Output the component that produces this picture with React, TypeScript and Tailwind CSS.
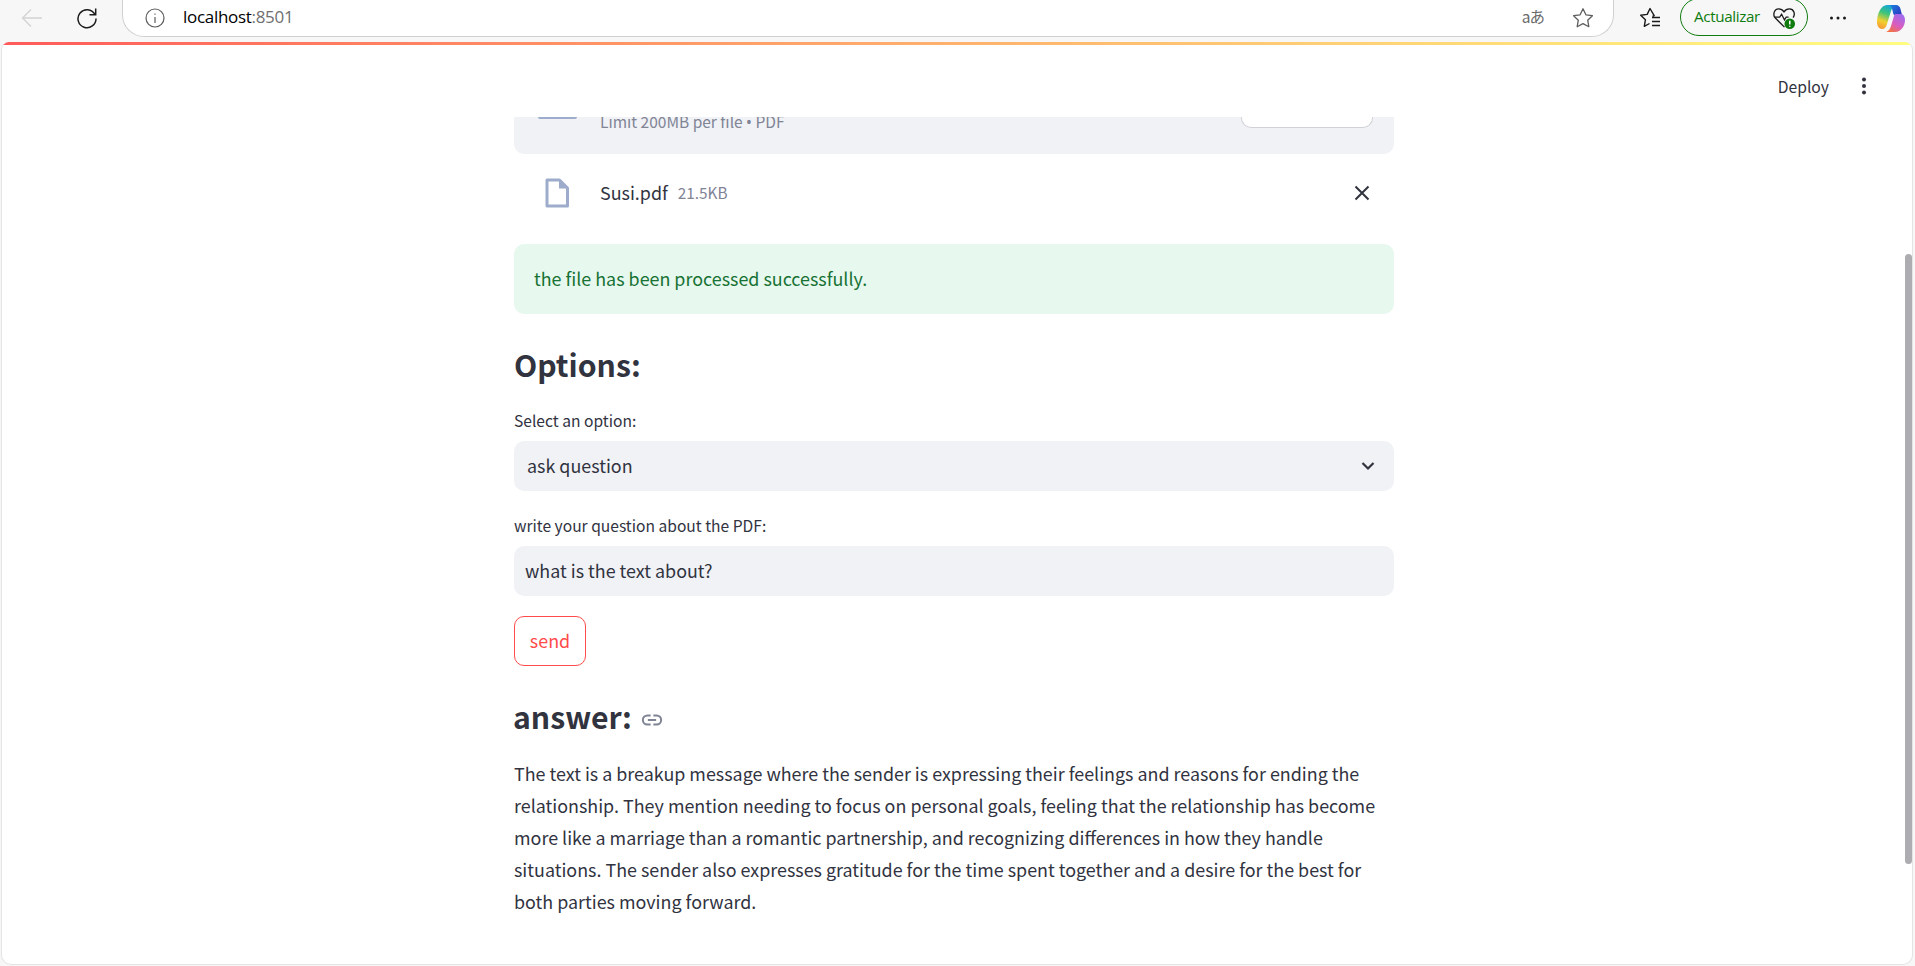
import React from "react";

const ui = "font-['Noto_Sans_CJK_SC','Source_Sans_Pro',sans-serif]";

function Toolbar() {
  return (
    <div className="h-[42px] overflow-hidden flex items-start bg-[#f7f7f7] font-['Open_Sans',sans-serif]">
      <div className="w-[122px] h-[36px] flex items-center shrink-0">
        <svg className="ml-[21px] w-[22px] h-[22px]" viewBox="0 0 22 22" fill="none" stroke="#d4d4d4" strokeWidth="1.4">
          <path d="M21 11H1.5M10 2.5 1.5 11l8.5 8.5" />
        </svg>
        <svg className="ml-[33px] w-[22px] h-[22px]" viewBox="0 0 22 22" fill="none" stroke="#1c1c1c" strokeWidth="1.5">
          <path d="M18.8 7.2A9 9 0 1 0 20 11.5" />
          <path d="M19.7 1.5v6.2h-6.2" />
        </svg>
      </div>
      <div className="w-[1492px] h-[37px] shrink-0 flex items-center rounded-b-[22px] border-b border-r border-l border-[#d0d0d0] bg-white">
        <svg className="ml-[22px] w-[20px] h-[20px]" viewBox="0 0 20 20" fill="none" stroke="#5c5c5c" strokeWidth="1.2">
          <circle cx="10" cy="10" r="9" />
          <path d="M10 9v6M10 5.4v1.4" />
        </svg>
        <span className="ml-[18px] -mt-[2px] text-[17px] tracking-[-0.3px] text-black">
          localhost<span className="text-[#6f6f6f]">:8501</span>
        </span>
        <span className="ml-auto -mt-[2px] text-[15.500px] leading-none text-[#6a6a6a] font-['Noto_Sans_CJK_JP',sans-serif] tracking-[-1px]">aあ</span>
        <svg className="ml-[28px] mr-[19px] w-[22px] h-[22px]" viewBox="0 0 22 22" fill="none" stroke="#5e5e5e" strokeWidth="1.3" strokeLinejoin="round">
          <path d="m11 1.8 2.9 6 6.5.9-4.7 4.5 1.1 6.5-5.8-3.1-5.8 3.1 1.1-6.5L1.6 8.7l6.500-.9z" />
        </svg>
      </div>
      <div className="flex items-start h-[36px] flex-1">
        <svg className="ml-[25px] mt-[7px] w-[22px] h-[22px]" viewBox="0 0 22 22" fill="none" stroke="#1a1a1a" strokeWidth="1.4" strokeLinejoin="round">
          <path d="M13.500 9.500 15.200 8.700 11 1.500 8.200 7.400l-6.500.9 4.700 4.500-1.100 6.500 5.200-2.800" />
          <path d="M13 10.500h8M13 14.500h8M13 18.500h8" />
        </svg>
        <div className="ml-[19px] w-[128px] h-[38px] -mt-[2px] shrink-0 flex items-center rounded-full border-[1.5px] border-[#107c10] pl-[13px] text-[15.200px] tracking-[-0.35px] text-[#107c10]">
          <span className="-mt-[1px]">Actualizar</span>
          <svg className="ml-[12px] mt-[1px] w-[24px] h-[24px]" viewBox="0 0 25 25" fill="none">
            <path d="M13 22 3.500 12.600C.5 9.500 2 3 7 3c2.500 0 4.400 1.400 5.500 3 1.100-1.600 3-3 5.500-3 5 0 6.500 5.500 4 9" stroke="#1a1a1a" strokeWidth="1.4" />
            <path d="M3 11.500h5l2-3 3 6 1.800-3h2.500" stroke="#1a1a1a" strokeWidth="1.300" />
            <circle cx="18.500" cy="18.500" r="5.500" fill="#107c10" />
            <path d="M18.500 15.300v3.900M18.500 20.500v1" stroke="#fff" strokeWidth="1.600" />
          </svg>
        </div>
        <svg className="ml-[21px] mt-[9px] w-[18px] h-[18px]" viewBox="0 0 18 18" fill="#1a1a1a">
          <circle cx="2.500" cy="9" r="1.500" />
          <circle cx="9" cy="9" r="1.500" />
          <circle cx="15.500" cy="9" r="1.500" />
        </svg>
        <svg className="ml-[30px] mt-[4px] w-[28px] h-[28px]" viewBox="0 0 28 28">
          <defs>
            <linearGradient id="cpa" x1="0.6" y1="0" x2="0.3" y2="1">
              <stop offset="0" stopColor="#16a6d8" />
              <stop offset="0.35" stopColor="#3cc47c" />
              <stop offset="0.7" stopColor="#f2d02f" />
              <stop offset="1" stopColor="#f59a36" />
            </linearGradient>
            <linearGradient id="cpb" x1="0" y1="0" x2="1" y2="0.6">
              <stop offset="0" stopColor="#1a86e0" />
              <stop offset="1" stopColor="#2b3fc4" />
            </linearGradient>
            <linearGradient id="cpc" x1="0.8" y1="0" x2="0.2" y2="1">
              <stop offset="0" stopColor="#9b6cf0" />
              <stop offset="0.55" stopColor="#d95cc0" />
              <stop offset="1" stopColor="#f4743c" />
            </linearGradient>
          </defs>
          <path d="M10 1h9c-3 1-4 3-5 6l-4 13c-1 4-3 5-5 5-3 0-5-3-5-7C0 10 4 1 10 1Z" fill="url(#cpa)" />
          <path d="M12 1h7c2.500 0 4 2 4.500 4l1.500 6h-7c-1 0-1.500-.5-1.800-1.500L15 4.500C14.500 2.500 13.500 1.500 12 1Z" fill="url(#cpb)" />
          <path d="M18.500 10H24c2.500 0 4 3 4 6 0 6-4 12-10 12H9c3-1 4-3 5-6l3-10c.3-1 .7-1.700 1.500-2Z" fill="url(#cpc)" />
        </svg>
      </div>
    </div>
  );
}

function Header() {
  return (
    <div className="h-[72px] flex items-center justify-end text-[#31333f]">
      <span className="text-[15.700px] leading-none mt-[11px]">Deploy</span>
      <svg className="ml-[25px] mr-[38px] mt-[10px] w-[20px] h-[20px]" viewBox="0 0 20 20" fill="#31333f">
        <circle cx="10" cy="3.500" r="2" />
        <circle cx="10" cy="10" r="2" />
        <circle cx="10" cy="16.500" r="2" />
      </svg>
    </div>
  );
}

function Uploader() {
  return (
    <div className="h-[37px] overflow-hidden rounded-b-[10px] bg-[#f0f2f6] flex items-start">
      <div className="ml-[24px] w-[39px] h-[2px] rounded-b-[3px] bg-[#9eaccb]" />
      <span className="ml-[23px] -mt-[6px] text-[15.500px] leading-[20px] text-[#808495]">
        Limit 200MB per file <span className="font-['Noto_Sans',sans-serif]">•</span> PDF
      </span>
      <div className="ml-auto mr-[21px] w-[132px] h-[11px] shrink-0 rounded-b-[10px] border-b border-l border-r border-[#d0d2d6] bg-white" />
    </div>
  );
}

function FileRow() {
  return (
    <div className="h-[78px] flex items-center">
      <svg className="ml-[31px] w-[24px] h-[30px]" viewBox="0 0 24 30" fill="none">
        <path d="M2 2h12.500L22.500 10v18H2z" stroke="#9eaccb" strokeWidth="3" strokeLinejoin="round" />
        <path d="M14 2 22.500 10.500H14z" fill="#9eaccb" />
      </svg>
      <span className="ml-[31px] -mt-[1px] text-[17.900px] leading-none text-[#31333f]">Susi.pdf</span>
      <span className="ml-[10px] text-[15.300px] leading-none text-[#808495]">21.5KB</span>
      <svg className="ml-auto mr-[24px] w-[16px] h-[16px]" viewBox="0 0 16 16" fill="none" stroke="#31333f" strokeWidth="2">
        <path d="m1.500 1.500 13 13M14.500 1.500l-13 13" />
      </svg>
    </div>
  );
}

export default function App() {
  return (
    <div className={`w-[1915px] h-[966px] overflow-hidden bg-[#f7f7f7] ${ui}`}>
      <Toolbar />
      <div className="relative ml-[1px] w-[1912px] h-[923px] overflow-hidden rounded-t-[8px] rounded-b-[10px] border-x border-b border-[#e4e4e4] bg-white">
        <div className="h-[3px] bg-gradient-to-r from-[#ff5a5a] to-[#fffd80]" />
        <Header />
        <main className="ml-[512px] w-[880px] text-[#31333f]">
          <Uploader />
          <FileRow />
          <div className="mt-[12px] h-[70px] flex items-center rounded-[10px] bg-[#e7f8ef] px-[20px] pb-[2px] text-[17.900px] text-[#177233]">
            the file has been processed successfully.
          </div>
          <h2 className="mt-[26px] h-[48px] text-[30.200px] leading-[48px] font-semibold">Options:</h2>
          <label className="mt-[21px] block h-[24px] text-[15.600px] leading-[22px]">Select an option:</label>
          <div className="mt-[8px] h-[50px] flex items-center rounded-[10px] bg-[#f0f2f6] pl-[13px] pr-[18px] text-[17.900px]">
            <span className="-mt-[2px]">ask question</span>
            <svg className="ml-auto w-[16px] h-[16px]" viewBox="0 0 16 16" fill="none" stroke="#31333f" strokeWidth="2.200">
              <path d="m2.500 5 5.500 5.500L13.500 5" />
            </svg>
          </div>
          <label className="mt-[23px] block h-[24px] text-[15.600px] leading-[22px]">write your question about the PDF:</label>
          <div className="mt-[8px] h-[50px] flex items-center rounded-[10px] bg-[#f0f2f6] pl-[11px] pb-[2px] text-[17.900px]">
            what is the text about?
          </div>
          <button className="mt-[20px] block w-[72px] h-[50px] rounded-[10px] border border-[#ff4b4b] bg-white pb-[2px] text-[17.900px] text-[#ff4b4b]">
            send
          </button>
          <div className="mt-[26px] h-[50px] flex items-center">
            <h3 className="-ml-[1px] -mt-[2px] text-[30.200px] leading-[50px] font-semibold">answer:</h3>
            <svg className="ml-[9px] mt-[5px] w-[22px] h-[22px]" viewBox="0 0 24 24" fill="none" stroke="#808495" strokeWidth="2.200">
              <path d="M10.500 7H7a5 5 0 0 0 0 10h3.500M13.500 7H17a5 5 0 0 1 0 10h-3.500M7.500 12h9" />
            </svg>
          </div>
          <p className="mt-[15px] text-[17.900px] leading-[32px]">
            The text is a breakup message where the sender is expressing their feelings and reasons for ending the relationship. They mention needing to focus on personal goals, feeling that the relationship has become more like a marriage than a romantic partnership, and recognizing differences in how they handle situations. The sender also expresses gratitude for the time spent together and a desire for the best for both parties moving forward.
          </p>
        </main>
        <div className="absolute right-0 top-[212px] w-[7px] h-[610px] rounded-full bg-[#adadb1]" />
      </div>
    </div>
  );
}
